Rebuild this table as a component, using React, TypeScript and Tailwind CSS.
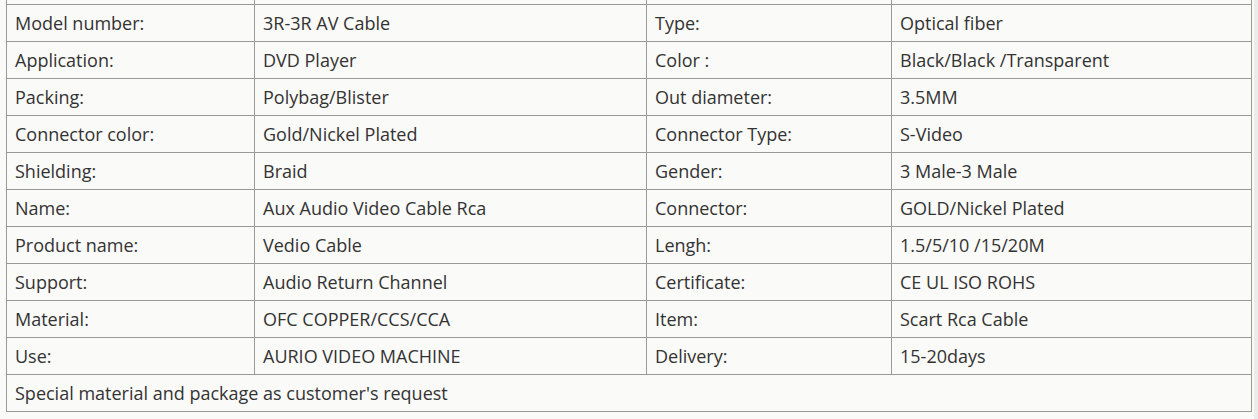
const rows: [string, string, string, string][] = [
  ["Model number:", "3R-3R AV Cable", "Type:", "Optical fiber"],
  ["Application:", "DVD Player", "Color :", "Black/Black /Transparent"],
  ["Packing:", "Polybag/Blister", "Out diameter:", "3.5MM"],
  ["Connector color:", "Gold/Nickel Plated", "Connector Type:", "S-Video"],
  ["Shielding:", "Braid", "Gender:", "3 Male-3 Male"],
  ["Name:", "Aux Audio Video Cable Rca", "Connector:", "GOLD/Nickel Plated"],
  ["Product name:", "Vedio Cable", "Lengh:", "1.5/5/10 /15/20M"],
  ["Support:", "Audio Return Channel", "Certificate:", "CE UL ISO ROHS"],
  ["Material:", "OFC COPPER/CCS/CCA", "Item:", "Scart Rca Cable"],
  ["Use:", "AURIO VIDEO MACHINE", "Delivery:", "15-20days"],
]

const cell = "border border-[#999] px-2 pt-px align-middle whitespace-nowrap"

export default function App() {
  return (
    <div className="flex h-[419px] w-[1258px] overflow-hidden bg-[#fafaf8] font-['Open_Sans',sans-serif] text-[18px] text-[#333]">
      <div className="flex-1 pl-[6px]">
        <table className="table-fixed border-collapse w-[1245px]">
          <colgroup>
            <col className="w-[248px]" />
            <col className="w-[392px]" />
            <col className="w-[245px]" />
            <col className="w-[360px]" />
          </colgroup>
          <tbody>
            <tr className="h-[4px]">
              <td className="border-x border-[#999] p-0" />
              <td className="border-x border-[#999] p-0" />
              <td className="border-x border-[#999] p-0" />
              <td className="border-x border-[#999] p-0" />
            </tr>
            {rows.map((r) => (
              <tr key={r[0]} className="h-[37px]">
                {r.map((c, i) => (
                  <td key={i} className={cell}>
                    {c}
                  </td>
                ))}
              </tr>
            ))}
            <tr className="h-[37px]">
              <td colSpan={4} className={cell}>
                Special material and package as customer's request
              </td>
            </tr>
          </tbody>
        </table>
      </div>
      {/* page scrollbar edge */}
      <div className="w-[4px] bg-[#ececec]" />
    </div>
  )
}
